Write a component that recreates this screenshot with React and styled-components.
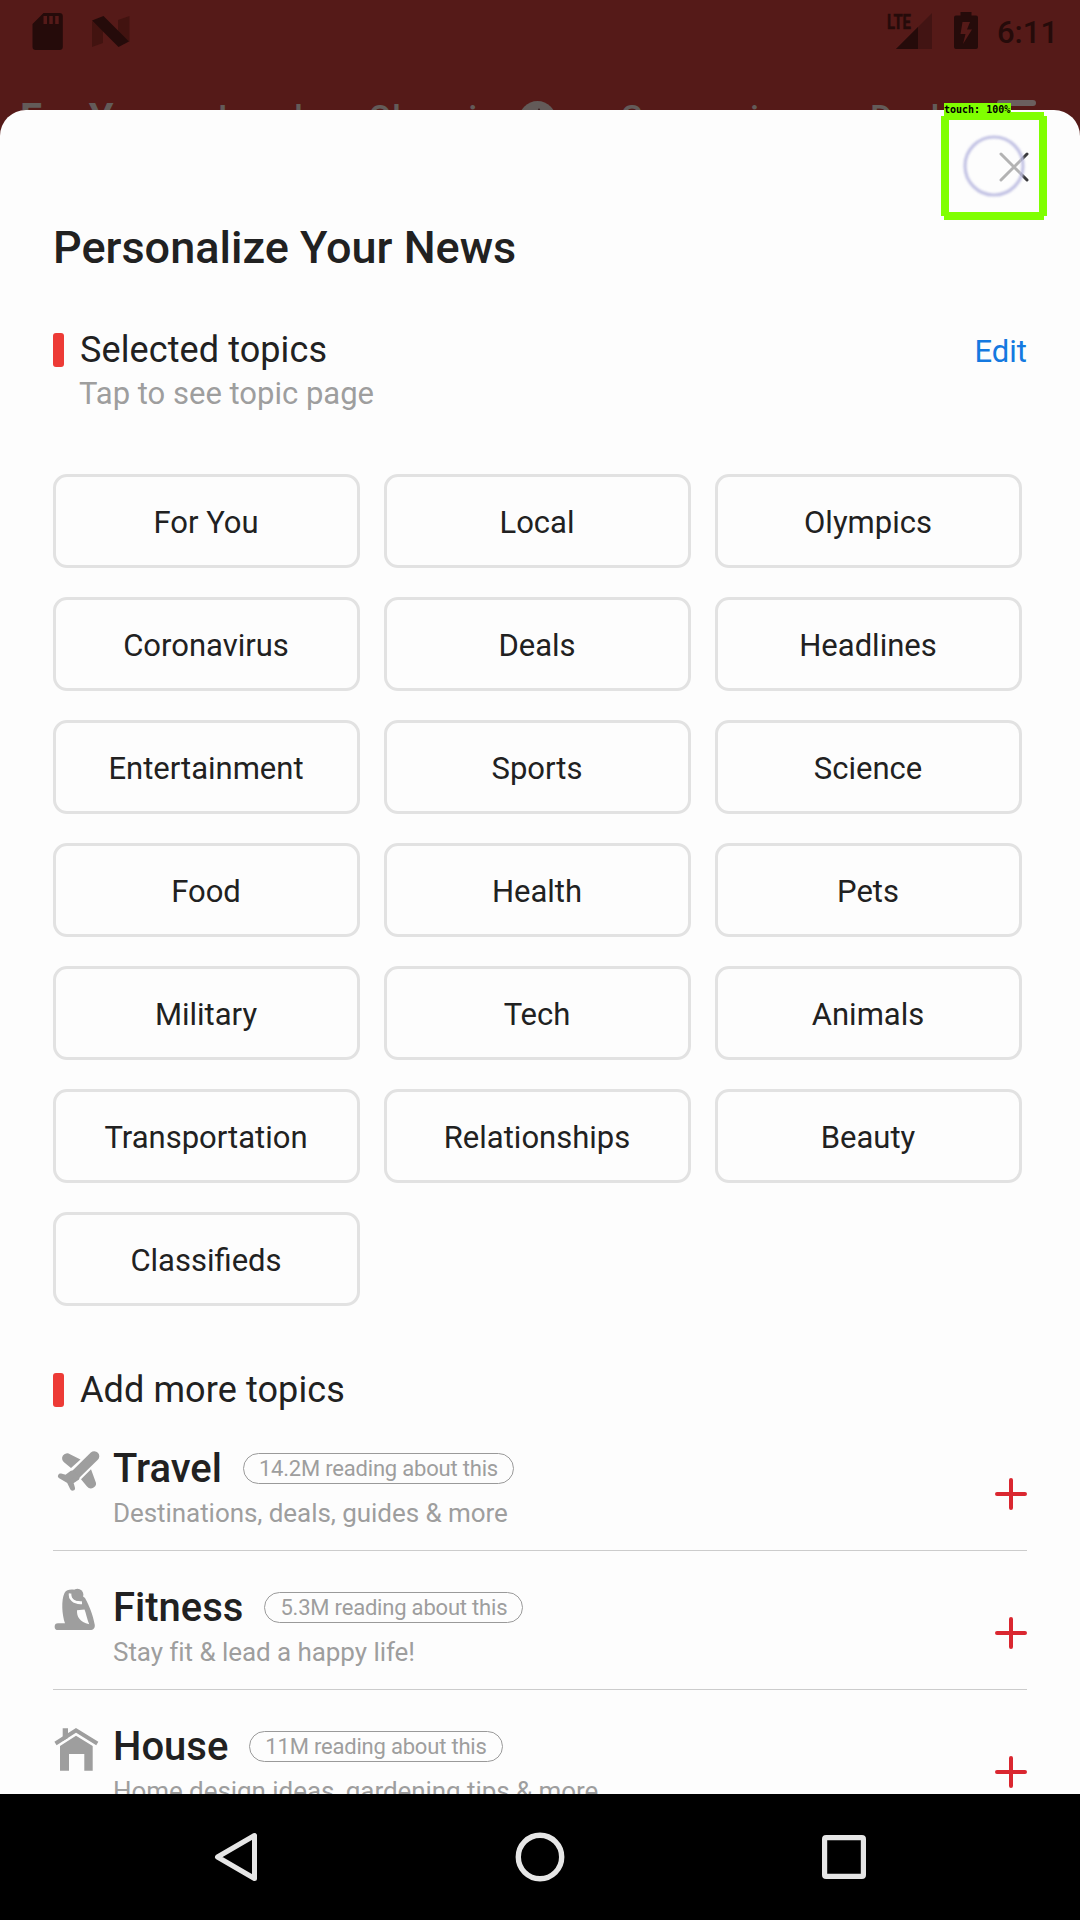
import React from "react";
import styled, { createGlobalStyle } from "styled-components";

const GlobalStyle = createGlobalStyle`
  * { box-sizing: border-box; }
  body { margin: 0; background: #551a18; }
  h1, h2, h3, p { margin: 0; font-weight: 400; }
  button { padding: 0; margin: 0; border: 0; background: none; font: inherit; color: inherit; }
`;

const Screen = styled.div`
  display: flex;
  flex-direction: column;
  width: 1080px;
  height: 1920px;
  overflow: hidden;
  background: #551a18;
  color: #212121;
  font-family: Roboto, "Liberation Sans", sans-serif;
`;

const StatusBar = styled.header`
  display: flex;
  flex: none;
  justify-content: space-between;
  height: 72px;
  padding: 12px 22px 0 32px;
  color: #250b0a;
`;

const StatusGroup = styled.div`
  display: flex;
  align-items: flex-start;
`;

const StatusIcon = styled.svg`
  display: block;
  flex: none;
  margin-right: ${(p) => p.$after || 0}px;
  overflow: visible;
`;

const Clock = styled.span`
  font-size: 31px;
  font-weight: 500;
  line-height: 42px;
`;

const TabStrip = styled.nav`
  display: flex;
  flex: none;
  height: 38px;
  overflow: hidden;
  padding-left: 20px;
  color: #635b59;
`;

const Tab = styled.span`
  flex: none;
  width: ${(p) => p.$width}px;
  padding-top: 22px;
  font-size: ${(p) => (p.$active ? 40 : 35)}px;
  font-weight: ${(p) => (p.$active ? 700 : 500)};
  line-height: 50px;
  white-space: nowrap;
`;

const TabBadge = styled.svg`
  display: block;
  flex: none;
  margin: 29px 64px 0 0;
`;

const MenuBar = styled.span`
  flex: none;
  width: 39px;
  height: 6px;
  margin-top: 28px;
  border-radius: 3px;
  background: #6b5f5e;
`;

const Sheet = styled.main`
  display: flex;
  flex: 1;
  flex-direction: column;
  min-height: 0;
  overflow: hidden;
  padding: 0 53px;
  border-radius: 26px 26px 0 0;
  background: #fdfdfd;
`;

const SheetTop = styled.div`
  display: flex;
  flex: none;
  justify-content: flex-end;
  height: 111px;
  padding-top: 41px;
`;

const CloseButton = styled.button`
  width: 30px;
  height: 30px;
  margin-right: -2px;
  svg { display: block; }
`;

const Title = styled.h1`
  flex: none;
  font-size: 45px;
  font-weight: 500;
  line-height: 54px;
`;

const SectionHead = styled.div`
  display: flex;
  flex: none;
  align-items: center;
  height: 42px;
  margin-top: ${(p) => p.$gap}px;
`;

const Marker = styled.span`
  width: 11px;
  height: 34px;
  margin-right: 15px;
  border-radius: 3px;
  background: #ed3b36;
`;

const SectionTitle = styled.h2`
  flex: 1;
  padding-left: 1px;
  font-size: 36px;
  letter-spacing: 0.1px;
  line-height: 42px;
`;

const EditLink = styled.button`
  color: #1479e0;
  font-size: 31px;
  line-height: 42px;
  padding-top: 4px;
`;

const Hint = styled.p`
  flex: none;
  margin: 5px 0 62px 26px;
  color: #9e9e9e;
  font-size: 31px;
  line-height: 36px;
`;

const TopicGrid = styled.div`
  display: grid;
  flex: none;
  grid-template-columns: repeat(3, 307px);
  grid-auto-rows: 94px;
  gap: 29px 24px;
`;

const Chip = styled.button`
  padding: 2px 1px 0 0;
  border: 3px solid #e2e2e2;
  border-radius: 14px;
  font-size: 31px;
  text-align: center;
`;

const Suggestions = styled.section`
  flex: none;
  margin-top: 1px;
`;

const SuggestionRow = styled.article`
  display: flex;
  height: 139px;
  padding-top: 35px;
  border-bottom: 1px solid #cccccc;
`;

const RowIcon = styled.svg`
  display: block;
  flex: none;
  margin-right: 12px;
  color: #9e9e9e;
`;

const RowBody = styled.div`
  flex: 1;
`;

const RowHeading = styled.div`
  display: flex;
  align-items: center;
  height: 43px;
`;

const RowName = styled.h3`
  margin-right: 21px;
  font-size: 40px;
  font-weight: 500;
  line-height: 43px;
`;

const ReaderPill = styled.span`
  height: 31px;
  padding: 0 15px;
  border: 1px solid #9a9a9a;
  border-radius: 16px;
  color: #9e9e9e;
  font-size: 22px;
  letter-spacing: -0.2px;
  line-height: 30px;
`;

const RowText = styled.p`
  margin-top: 7px;
  color: #9e9e9e;
  font-size: 26px;
  letter-spacing: -0.06px;
  line-height: 32px;
`;

const AddButton = styled.button`
  width: 32px;
  height: 32px;
  margin-top: 31px;
  svg { display: block; }
`;

const NavBar = styled.footer`
  display: grid;
  flex: none;
  grid-template-columns: repeat(3, 304px);
  justify-content: center;
  place-items: center;
  height: 126px;
  background: #000;
`;

/* Pointer marker drawn above the page */
const TouchBox = styled.div`
  position: absolute;
  top: 112px;
  left: 941px;
  width: 106px;
  height: 108px;
`;

const TouchLabel = styled.span`
  position: absolute;
  top: -9px;
  left: 3px;
  width: 67px;
  height: 13px;
  background: #80ff00;
  color: #000;
  font: bold 10px/13px "DejaVu Sans Mono", monospace;
  white-space: pre;
`;

const TOPICS = [
  "For You", "Local", "Olympics",
  "Coronavirus", "Deals", "Headlines",
  "Entertainment", "Sports", "Science",
  "Food", "Health", "Pets",
  "Military", "Tech", "Animals",
  "Transportation", "Relationships", "Beauty",
  "Classifieds",
];

const PlaneIcon = () => (
  <>
    <path d="M19 31 41.3 9.2" stroke="currentColor" strokeWidth="10" strokeLinecap="round" />
    <path d="M7.5 29 13 30.5 19 26 24 31 17.8 35 19.5 41.2 16 34z" stroke="currentColor" strokeWidth="5" strokeLinejoin="round" fill="currentColor" />
    <path d="M17 7.2 27.5 12.4 18 21 11.3 15.6A5 5 0 0 1 17 7.2z" fill="currentColor" />
    <path d="M38 22.3 42.3 34A5 5 0 0 1 34 39.5L28 32.3z" fill="currentColor" />
  </>
);

const YogaIcon = () => (
  <>
    <path
      d="M5 37.3H12C9 29 8 14 11.5 7 13.5 3.5 18 3 22 4L32 12C36 19 40 29 41.7 38.5 42.3 42 40.5 44 37 44H5A3.3 3.3 0 0 1 5 37.3zM24 24.2C23.8 31 26.5 35.5 36.2 38.2 34 33 33 27 31.5 23.4z"
      fill="currentColor"
      fillRule="evenodd"
    />
    <path d="M17.3 7.5C16.6 12 20 17.3 29 16.7" stroke="#fdfdfd" strokeWidth="3" />
    <circle cx="24.4" cy="8.8" r="6" fill="currentColor" />
  </>
);

const HouseIcon = () => (
  <>
    <path d="M9.7 3.2H15V13L9.7 16z" fill="currentColor" />
    <path d="M2.5 18.5 23 5.4 44.3 18.5" stroke="currentColor" strokeWidth="4" />
    <path d="M23 10.8 39.7 21V45.7H31.3V29H16V45.7H7V21z" fill="currentColor" />
  </>
);

const SUGGESTIONS = [
  { name: "Travel", readers: "14.2M", text: "Destinations, deals, guides & more", Icon: PlaneIcon },
  { name: "Fitness", readers: "5.3M", text: "Stay fit & lead a happy life!", Icon: YogaIcon },
  { name: "House", readers: "11M", text: "Home design ideas, gardening tips & more", Icon: HouseIcon },
];

function Status() {
  return (
    <StatusBar>
      <StatusGroup>
        <StatusIcon $after={29} width="31" height="39" viewBox="0 0 31 39">
          <path fill="currentColor" fillRule="evenodd" d="M11.5 1H27.5A3.3 3.3 0 0 1 30.8 4.3V34.7A3.3 3.3 0 0 1 27.5 38H3.8A3.3 3.3 0 0 1 .5 34.7V12zM11.5 4v8H15V4zM17.3 4v8h3.5V4zM23.2 4v8h3.5V4z" />
        </StatusIcon>
        <StatusIcon width="38" height="39" viewBox="0 0 38 39">
          <path fill="#421310" d="M0 9 11 19V31L0 35zM26 8 37.5 4V30L26 21z" />
          <path fill="currentColor" d="M0 8.5 11.5 4 37 29.5 26.5 35z" />
        </StatusIcon>
      </StatusGroup>
      <StatusGroup>
        <StatusIcon $after={22} width="46" height="38" viewBox="0 0 46 38">
          <path fill="#421413" d="M10 37H46V1z" />
          <path fill="currentColor" d="M10 37H32V15z" />
          <text x="1" y="17" fill="currentColor" stroke="currentColor" strokeWidth="0.5" fontFamily="Roboto, sans-serif" fontSize="21" fontWeight="700" textLength="24" lengthAdjust="spacingAndGlyphs">LTE</text>
        </StatusIcon>
        <StatusIcon $after={19} width="24" height="38" viewBox="0 0 24 38">
          <path fill="currentColor" fillRule="evenodd" d="M6.5 0H17.5V3.5H22A2 2 0 0 1 24 5.5V35A2 2 0 0 1 22 37H2A2 2 0 0 1 0 35V5.5A2 2 0 0 1 2 3.5H6.5zM8.5 10 6.5 22H11.5L9 32 18 17.5H13L16 10z" />
        </StatusIcon>
        <Clock>6:11</Clock>
      </StatusGroup>
    </StatusBar>
  );
}

export default function App() {
  return (
    <Screen>
      <GlobalStyle />
      <Status />
      <TabStrip>
        <Tab $active $width={198}>For You</Tab>
        <Tab $width={150}>Local</Tab>
        <Tab $width={151}>Olympics</Tab>
        <TabBadge width="37" height="37" viewBox="0 0 37 37">
          <circle cx="18.5" cy="18.5" r="18.5" fill="currentColor" />
          <path d="M20 7 23 12H17z" fill="#3a2020" />
        </TabBadge>
        <Tab $width={250}>Coronavirus</Tab>
        <Tab $width={127}>Deals</Tab>
        <MenuBar />
      </TabStrip>

      <Sheet>
        <SheetTop>
          <CloseButton aria-label="Close">
            <svg width="30" height="32" viewBox="0 0 30 32" fill="none">
              <path d="M2 3 28 29M28 3 2 29" stroke="#3a3a3c" strokeWidth="3" strokeLinecap="round" />
            </svg>
          </CloseButton>
        </SheetTop>
        <Title>Personalize Your News</Title>

        <SectionHead $gap={54}>
          <Marker />
          <SectionTitle>Selected topics</SectionTitle>
          <EditLink>Edit</EditLink>
        </SectionHead>
        <Hint>Tap to see topic page</Hint>
        <TopicGrid>
          {TOPICS.map((topic) => (
            <Chip key={topic}>{topic}</Chip>
          ))}
        </TopicGrid>

        <SectionHead $gap={63}>
          <Marker />
          <SectionTitle>Add more topics</SectionTitle>
        </SectionHead>
        <Suggestions>
          {SUGGESTIONS.map(({ name, readers, text, Icon }) => (
            <SuggestionRow key={name}>
              <RowIcon width="48" height="48" viewBox="0 0 48 48" fill="none">
                <Icon />
              </RowIcon>
              <RowBody>
                <RowHeading>
                  <RowName>{name}</RowName>
                  <ReaderPill>{readers} reading about this</ReaderPill>
                </RowHeading>
                <RowText>{text}</RowText>
              </RowBody>
              <AddButton aria-label={`Add ${name}`}>
                <svg width="32" height="32" viewBox="0 0 32 32" fill="none">
                  <path d="M2 16H30M16 2V30" stroke="#da2730" strokeWidth="4" strokeLinecap="round" />
                </svg>
              </AddButton>
            </SuggestionRow>
          ))}
        </Suggestions>
      </Sheet>

      <NavBar>
        <svg width="44" height="50" viewBox="0 0 44 50" fill="none">
          <path d="M40.5 3.5V46.5L3.5 25z" stroke="#e6e6e6" strokeWidth="5" strokeLinejoin="round" />
        </svg>
        <svg width="50" height="50" viewBox="0 0 50 50" fill="none">
          <circle cx="25" cy="25" r="21.7" stroke="#e6e6e6" strokeWidth="5.4" />
        </svg>
        <svg width="44" height="44" viewBox="0 0 44 44" fill="none">
          <rect x="2.6" y="2.6" width="38.8" height="38.8" rx="1.5" stroke="#e6e6e6" strokeWidth="5.2" />
        </svg>
      </NavBar>

      <TouchBox>
        <svg width="106" height="108" viewBox="0 0 106 108" fill="none">
          <defs>
            <filter id="soft" x="-20%" y="-20%" width="140%" height="140%">
              <feGaussianBlur stdDeviation="1.2" />
            </filter>
          </defs>
          <circle cx="53" cy="54" r="28" fill="#fdfdfd" fillOpacity=".62" />
          <circle cx="53" cy="54" r="29" stroke="#c3c3e4" strokeWidth="3.2" filter="url(#soft)" />
          <path fill="#80ff00" fillRule="evenodd" d="M3 0H103V4H106V104H103V108H3V104H0V4H3zM8 8V100H98V8z" />
        </svg>
        <TouchLabel>touch: 100%</TouchLabel>
      </TouchBox>
    </Screen>
  );
}
